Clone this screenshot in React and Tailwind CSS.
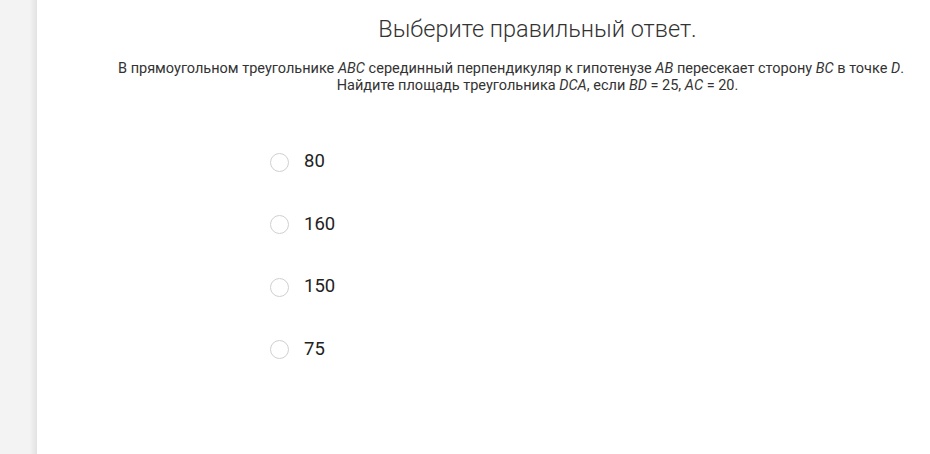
const options = ['80', '160', '150', '75'];

export default function App() {
  return (
    <div className="flex h-[454px] w-[930px] overflow-hidden bg-white font-['Roboto',sans-serif]">
      <div className="w-[37px] shrink-0 bg-gradient-to-r from-[#f3f3f3] from-80% to-[#e2e2e2]" />
      <main className="flex-1">
        <h1 className="pl-[105px] pt-[14px] text-center text-[23.5px] font-light leading-[30px] text-[#333]">
          Выберите правильный ответ.
        </h1>
        <div className="mt-[16px] text-[14.5px] leading-[17px] text-[#333]">
          <div className="pl-[81px] pr-[29px] text-center whitespace-nowrap">
            В прямоугольном треугольнике <i>ABC</i> серединный перпендикуляр к гипотенузе <i>AB</i> пересекает сторону <i>BC</i> в точке <i>D</i>.
          </div>
          <div className="pl-[105px] text-center whitespace-nowrap">
            Найдите площадь треугольника <i>DCA</i>, если <i>BD</i> = 25, <i>AC</i> = 20.
          </div>
        </div>
        <div className="mt-[57px] flex flex-col gap-[40.5px] pl-[233px]">
          {options.map((o) => (
            <label key={o} className="flex h-[22px] items-center">
              <span className="h-[19px] w-[19px] rounded-full border border-[#d0d0d0] bg-white" />
              <span className="ml-[15px] text-[18.5px] text-[#222]">{o}</span>
            </label>
          ))}
        </div>
      </main>
    </div>
  );
}
